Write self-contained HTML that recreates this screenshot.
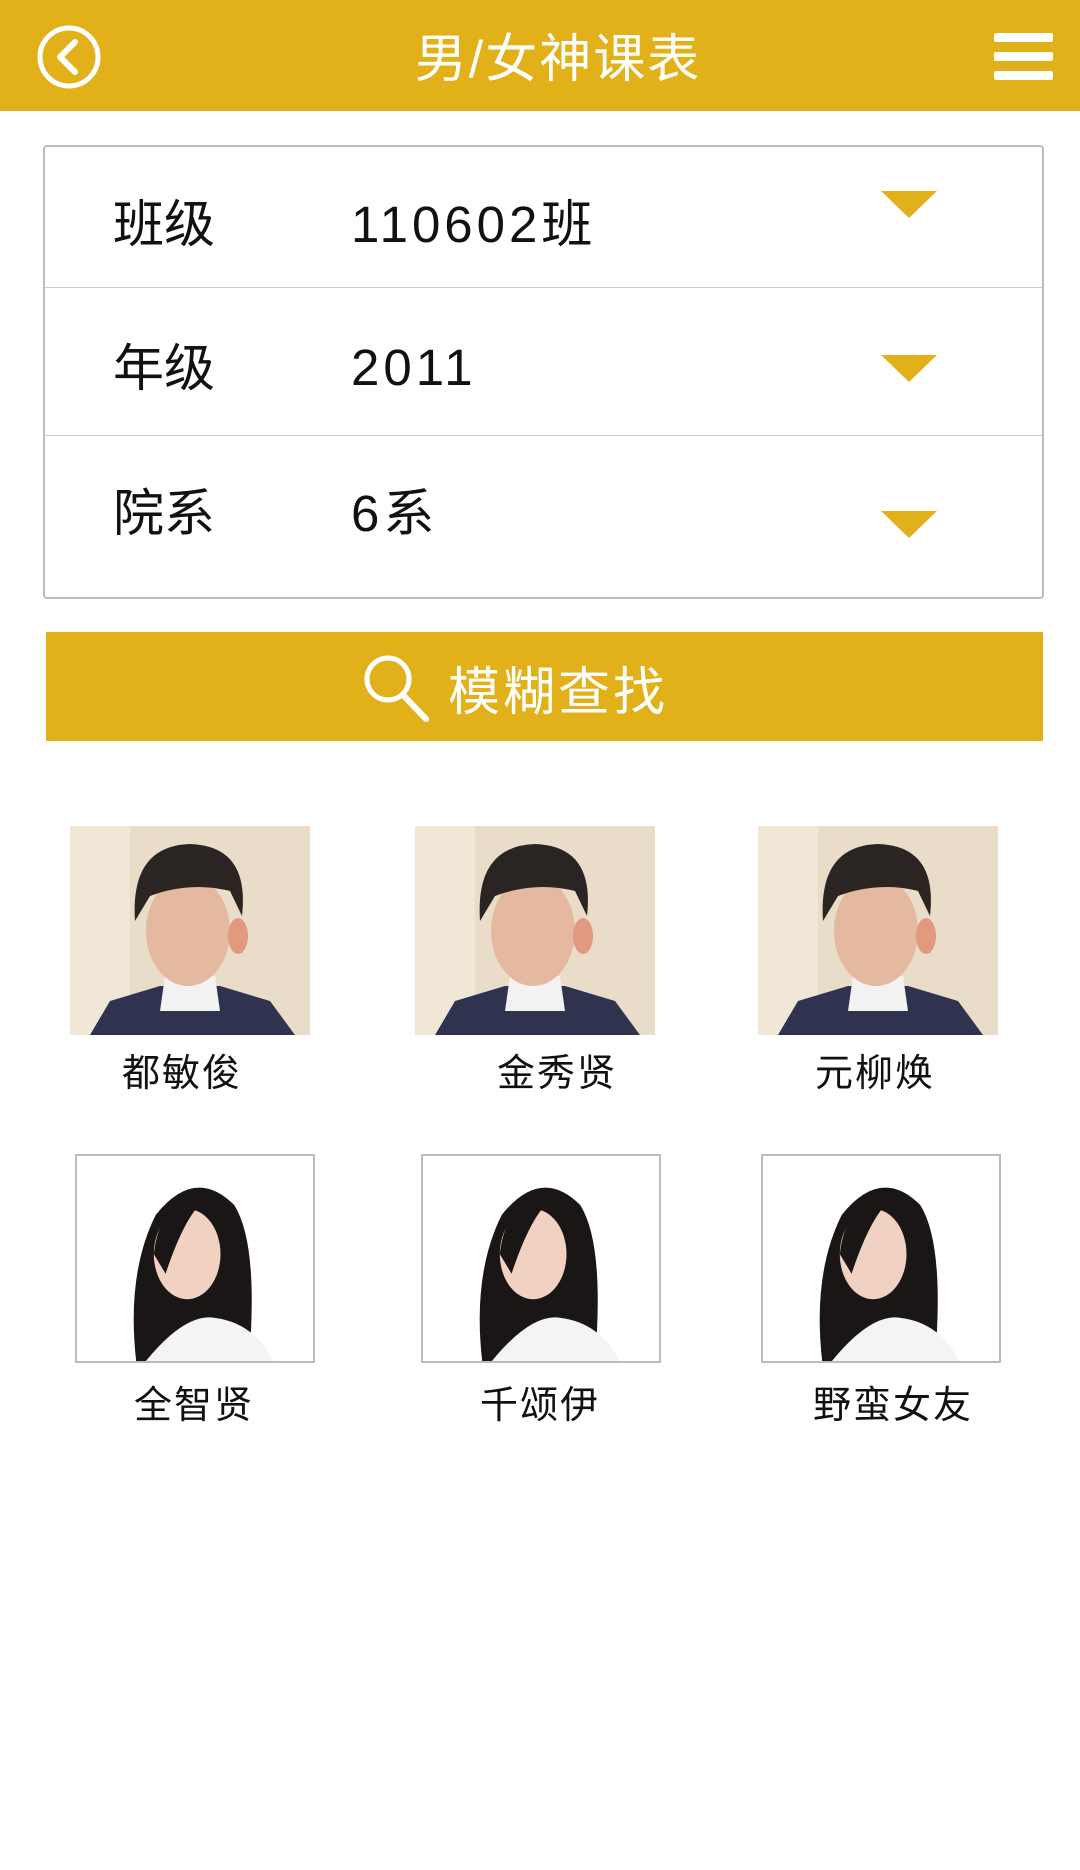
<!DOCTYPE html>
<html><head><meta charset="utf-8"><style>
*{margin:0;padding:0;box-sizing:border-box}
body{width:1080px;height:1870px;background:#fff;font-family:"Liberation Sans","Noto Sans CJK SC",sans-serif;position:relative;overflow:hidden;color:#111}
.abs{position:absolute}
.hdr{left:0;top:0;width:1080px;height:111px;background:#E2B11A}
.title{left:18px;width:1080px;top:17px;text-align:center;color:#fff;font-size:52px;letter-spacing:2px}
.box{left:43px;top:145px;width:1001px;height:454px;border:2px solid #bbb;border-radius:4px}
.row{position:absolute;left:0;width:997px;border-bottom:1px solid #ccc}
.lab{position:absolute;left:68px;font-size:51px}
.val{position:absolute;left:306px;font-size:51px;letter-spacing:4px}
.tri{position:absolute;left:836px;width:0;height:0;border-left:28px solid transparent;border-right:28px solid transparent;border-top:27px solid #E2B11A}
.btn{left:46px;top:632px;width:997px;height:109px;background:#E2B11A}
.btxt{left:448px;top:650px;color:#fff;font-size:52px;letter-spacing:3px}
.ph{position:absolute;width:240px;height:209px;overflow:hidden}
.nm{position:absolute;font-size:38px;text-align:center;width:240px;letter-spacing:2px}
</style></head><body>
<div class="abs hdr"></div>
<svg class="abs" style="left:36px;top:24px" width="68" height="68" viewBox="0 0 68 68"><circle cx="33" cy="33" r="29" fill="none" stroke="#fff" stroke-width="5"/><path d="M39 18 L24 33 L39 48" fill="none" stroke="#fff" stroke-width="6" stroke-linecap="round" stroke-linejoin="round"/></svg>
<div class="abs title">男/女神课表</div>
<div class="abs" style="left:994px;top:33px;width:59px;height:9px;background:#fff;border-radius:2px"></div>
<div class="abs" style="left:994px;top:52px;width:59px;height:9px;background:#fff;border-radius:2px"></div>
<div class="abs" style="left:994px;top:71px;width:59px;height:9px;background:#fff;border-radius:2px"></div>

<div class="abs box">
 <div class="row" style="top:0;height:141px"><div class="lab" style="top:36px">班级</div><div class="val" style="top:36px">110602班</div><div class="tri" style="top:44px"></div></div>
 <div class="row" style="top:141px;height:148px"><div class="lab" style="top:39px">年级</div><div class="val" style="top:50px">2011</div><div class="tri" style="top:67px"></div></div>
 <div class="row" style="top:289px;height:161px;border:none"><div class="lab" style="top:36px">院系</div><div class="val" style="top:36px">6系</div><div class="tri" style="top:75px"></div></div>
</div>

<div class="abs btn"></div>
<svg class="abs" style="left:362px;top:653px" width="70" height="72" viewBox="0 0 70 72"><circle cx="26" cy="26" r="21" fill="none" stroke="#fff" stroke-width="5"/><path d="M41 42 L64 66" stroke="#fff" stroke-width="6" stroke-linecap="round"/></svg>
<div class="abs btxt">模糊查找</div>

<svg width="0" height="0" style="position:absolute"><defs>
<g id="man">
<rect width="240" height="209" fill="#e9dcc8"/><rect x="0" y="0" width="60" height="209" fill="#f1e7d7"/>
<path d="M20 209 L40 175 L90 160 L150 160 L200 175 L225 209Z" fill="#2f3350"/>
<path d="M95 150 L145 150 L150 185 L90 185Z" fill="#f2f2f2"/>
<ellipse cx="118" cy="105" rx="42" ry="55" fill="#e5b9a0"/>
<path d="M65 95 Q60 20 120 18 Q180 20 172 90 L160 65 Q120 55 80 70Z" fill="#2a2423"/>
<ellipse cx="168" cy="110" rx="10" ry="18" fill="#e19a80"/>
</g>
<g id="woman">
<rect width="240" height="209" fill="#fff"/>
<path d="M60 209 Q50 120 80 60 Q120 10 160 50 Q185 90 175 209Z" fill="#1a1616"/>
<ellipse cx="112" cy="100" rx="34" ry="46" fill="#f1d2c2"/>
<path d="M70 209 Q110 160 140 165 Q180 170 200 209Z" fill="#f4f4f4"/>
<path d="M78 100 Q85 40 130 45 Q110 60 90 120Z" fill="#1a1616"/>
</g></defs></svg>

<svg class="ph" style="left:70px;top:826px" viewBox="0 0 240 209"><use href="#man"/></svg>
<svg class="ph" style="left:415px;top:826px" viewBox="0 0 240 209"><use href="#man"/></svg>
<svg class="ph" style="left:758px;top:826px" viewBox="0 0 240 209"><use href="#man"/></svg>
<div class="nm" style="left:62px;top:1042px">都敏俊</div>
<div class="nm" style="left:437px;top:1042px">金秀贤</div>
<div class="nm" style="left:755px;top:1042px">元柳焕</div>

<svg class="ph" style="left:75px;top:1154px;border:2px solid #bbb" viewBox="0 0 240 209"><use href="#woman"/></svg>
<svg class="ph" style="left:421px;top:1154px;border:2px solid #bbb" viewBox="0 0 240 209"><use href="#woman"/></svg>
<svg class="ph" style="left:761px;top:1154px;border:2px solid #bbb" viewBox="0 0 240 209"><use href="#woman"/></svg>
<div class="nm" style="left:74px;top:1374px">全智贤</div>
<div class="nm" style="left:420px;top:1374px">千颂伊</div>
<div class="nm" style="left:773px;top:1374px">野蛮女友</div>
</body></html>
